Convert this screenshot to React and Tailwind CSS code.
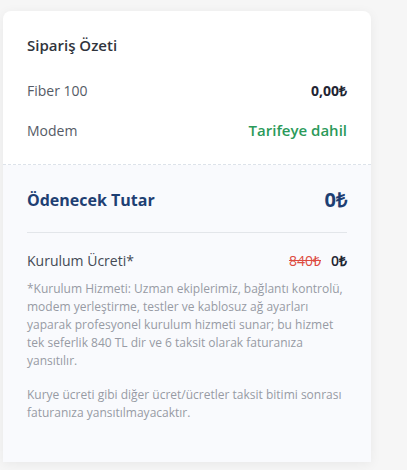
import React from 'react';

export default function App() {
  const rows = [
    { label: "Fiber 100", value: "0,00₺", cls: "text-[#1f2533] font-bold" },
    { label: "Modem", value: "Tarifeye dahil", cls: "text-[#2b9a5a] font-semibold text-[15px]" },
  ];

  return (
    <div className="min-h-screen bg-[#f6f6f6] pl-[3px] pt-[11px]" style={{ fontFamily: '"Open Sans", sans-serif' }}>
      <div className="w-[368px] h-[451px] bg-white rounded-t-lg shadow-[0_2px_12px_rgba(0,0,0,0.06)] overflow-hidden flex flex-col">
        {/* Summary */}
        <div className="px-6 pt-6 pb-6 border-b border-dashed border-[#dde3ea]">
          <h2 className="text-[15px] leading-5 font-semibold text-[#30343c]">Sipariş Özeti</h2>
          <div className="mt-[25px] flex flex-col gap-5">
            {rows.map(r => (
              <div key={r.label} className="flex justify-between items-center h-5">
                <span className="text-[14px] text-[#555b66]">{r.label}</span>
                <span className={`text-[14px] ${r.cls}`}>{r.value}</span>
              </div>
            ))}
          </div>
        </div>

        {/* Total */}
        <div className="flex-1 bg-[#f9fafd] px-6 pt-[21px]">
          <div className="flex justify-between items-center h-7">
            <span className="text-[16px] font-bold text-[#1e3f73]">Ödenecek Tutar</span>
            <span className="text-[20px] font-bold text-[#1e3f73]">0₺</span>
          </div>
          <div className="mt-[18px] border-t border-[#e3e6ea]"></div>
          <div className="mt-[17px] flex justify-between items-center h-5">
            <span className="text-[14px] text-[#444a55]">Kurulum Ücreti*</span>
            <span className="text-[14px] flex items-center gap-[10px]">
              <span className="text-[#dd4a40] line-through">840₺</span>
              <span className="text-[#1f2533] font-semibold">0₺</span>
            </span>
          </div>
          <p className="mt-[10px] text-[12px] leading-[18px] text-[#979ba4]">
            *Kurulum Hizmeti: Uzman ekiplerimiz, bağlantı kontrolü, modem yerleştirme, testler ve kablosuz ağ ayarları yaparak profesyonel kurulum hizmeti sunar; bu hizmet tek seferlik 840 TL dir ve 6 taksit olarak faturanıza yansıtılır.
          </p>
          <p className="mt-4 text-[12px] leading-[18px] text-[#979ba4]">
            Kurye ücreti gibi diğer ücret/ücretler taksit bitimi sonrası faturanıza yansıtılmayacaktır.
          </p>
        </div>
      </div>
    </div>
  );
}
